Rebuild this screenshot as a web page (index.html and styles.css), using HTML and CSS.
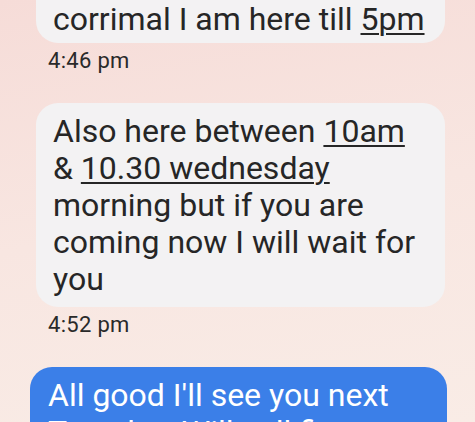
FILE: index.html
```html
<!DOCTYPE html>
<html lang="en">
<head>
    <meta charset="UTF-8">
    <meta name="viewport" content="width=device-width, initial-scale=1.0">
    <title>Messages</title>
    <link rel="stylesheet" href="styles.css">
</head>
<body>
    <div class="thread">
        <div class="msg incoming">
            <div class="bubble first">corrimal I am here till <u>5pm</u></div>
            <div class="time">4:46 pm</div>
        </div>

        <div class="msg incoming">
            <div class="bubble">Also here between <u>10am</u><br>&amp; <u>10.30 wednesday</u><br>morning but if you are<br>coming now I will wait for<br>you</div>
            <div class="time">4:52 pm</div>
        </div>

        <div class="msg outgoing">
            <div class="bubble">All good I'll see you next<br>Tuesday. Will call first</div>
        </div>
    </div>
</body>
</html>
```

FILE: styles.css
```css
body {
    margin: 0;
    height: 422px;
    overflow: hidden;
    font-family: 'Roboto', 'Noto Sans', sans-serif;
    color: #262626;
    background: linear-gradient(170deg, #f6dcd8 0%, #f8e6e1 50%, #f9ece6 100%);
}

.thread {
    margin-top: -42px;
    padding: 0 30px 0 36px;
}

.msg {
    margin-bottom: 30px;
}

.bubble {
    background-color: #f3f2f3;
    border-radius: 22px;
    padding: 10px 17px 9px;
    font-size: 32px;
    line-height: 37px;
}

/* top of this one is scrolled out of view */
.bubble.first {
    padding-top: 43px;
    padding-bottom: 5px;
}

.bubble u {
    text-decoration-thickness: 2px;
    text-underline-offset: 3px;
}

.time {
    margin: 6px 0 0 12px;
    font-size: 22px;
    line-height: 24px;
    letter-spacing: 0.3px;
    color: #2a2a2a;
}

.outgoing {
    margin-left: -6px;
    margin-right: -2px;
}

.outgoing .bubble {
    background-color: #3b7fe8;
    color: #ffffff;
    padding-left: 18px;
}
```
